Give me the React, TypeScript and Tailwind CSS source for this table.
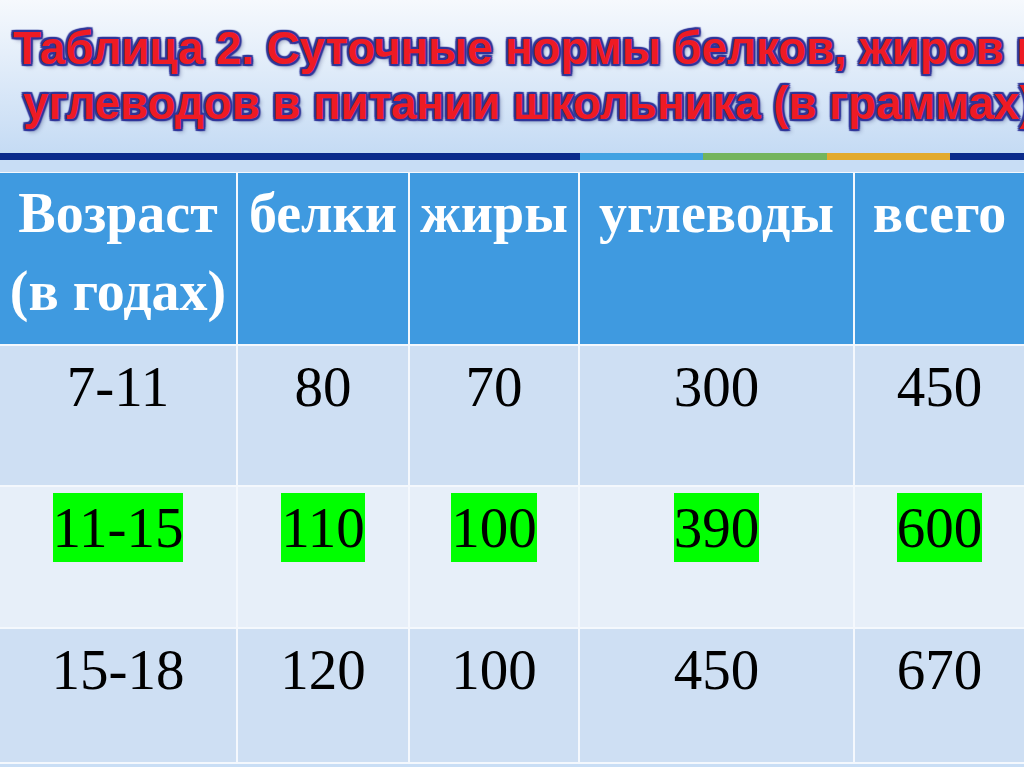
import React from 'react';

const outline =
  '[text-shadow:2px_0_1px_#30369a,-2px_0_1px_#30369a,0_2px_1px_#30369a,0_-2px_1px_#30369a,2px_2px_1px_#30369a,-2px_-2px_1px_#30369a,2px_-2px_1px_#30369a,-2px_2px_1px_#30369a,3px_3px_4px_rgba(20,30,90,0.35)]';

const headers = [
  { label: ['Возраст', '(в годах)'] },
  { label: ['белки'] },
  { label: ['жиры'] },
  { label: ['углеводы'] },
  { label: ['всего'] }
];

const rows = [
  { cells: ['7-11', '80', '70', '300', '450'], bg: 'bg-[#cedff3]', mark: false, h: 'h-[139px]' },
  { cells: ['11-15', '110', '100', '390', '600'], bg: 'bg-[#e7eff9]', mark: true, h: 'h-[140px]' },
  { cells: ['15-18', '120', '100', '450', '670'], bg: 'bg-[#cedff3]', mark: false, h: 'h-[133px]' }
];

const App: React.FC = () => {
  return (
    <div className="w-[1024px] h-[767px] overflow-hidden bg-[#c9def5] flex flex-col">
      {/* title */}
      <div className="h-[153px] bg-gradient-to-b from-[#f6f9fd] to-[#c5dbf4] pt-[21px] overflow-hidden">
        <div
          className={`font-['Liberation_Sans',Arial,sans-serif] font-bold text-[46px] leading-[55px] tracking-[-0.2px] text-[#ee1b24] whitespace-nowrap ${outline}`}
        >
          <div className="pl-[13px]">Таблица 2. Суточные нормы белков, жиров и</div>
          <div className="pl-[23px]">углеводов в питании школьника (в граммах)</div>
        </div>
      </div>

      {/* coloured stripe */}
      <div className="flex h-[7px]">
        <div className="w-[580px] bg-[#0b2b8c]" />
        <div className="w-[123px] bg-[#41a2e2]" />
        <div className="w-[124px] bg-[#74b45c]" />
        <div className="w-[123px] bg-[#e2aa2e]" />
        <div className="flex-1 bg-[#0b2b8c]" />
      </div>

      <div className="h-[12px] bg-[#c8ddf5]" />

      {/* table */}
      <div className="grid grid-cols-[236px_170px_168px_273px_169px] gap-[2px] bg-[#f4f8fd] pt-[1px] pb-[2px] w-[1024px] font-['Liberation_Serif','Times_New_Roman',serif]">
        {headers.map((h, i) => (
          <div
            key={i}
            className="h-[171px] bg-[#3f9ae0] text-white font-bold text-[56px] leading-[78px] text-center pt-[1px]"
          >
            {h.label.map((l, j) => (
              <div key={j} className="whitespace-nowrap">{l}</div>
            ))}
          </div>
        ))}
        {rows.map((r, ri) =>
          r.cells.map((c, ci) => (
            <div key={`${ri}-${ci}`} className={`${r.h} ${r.bg} text-center pt-[6px]`}>
              <span
                className={`inline-block text-[57px] leading-[69px] text-black ${
                  r.mark ? 'bg-[#00ff00]' : ''
                }`}
              >
                {c}
              </span>
            </div>
          ))
        )}
      </div>
    </div>
  );
};

export default App;
